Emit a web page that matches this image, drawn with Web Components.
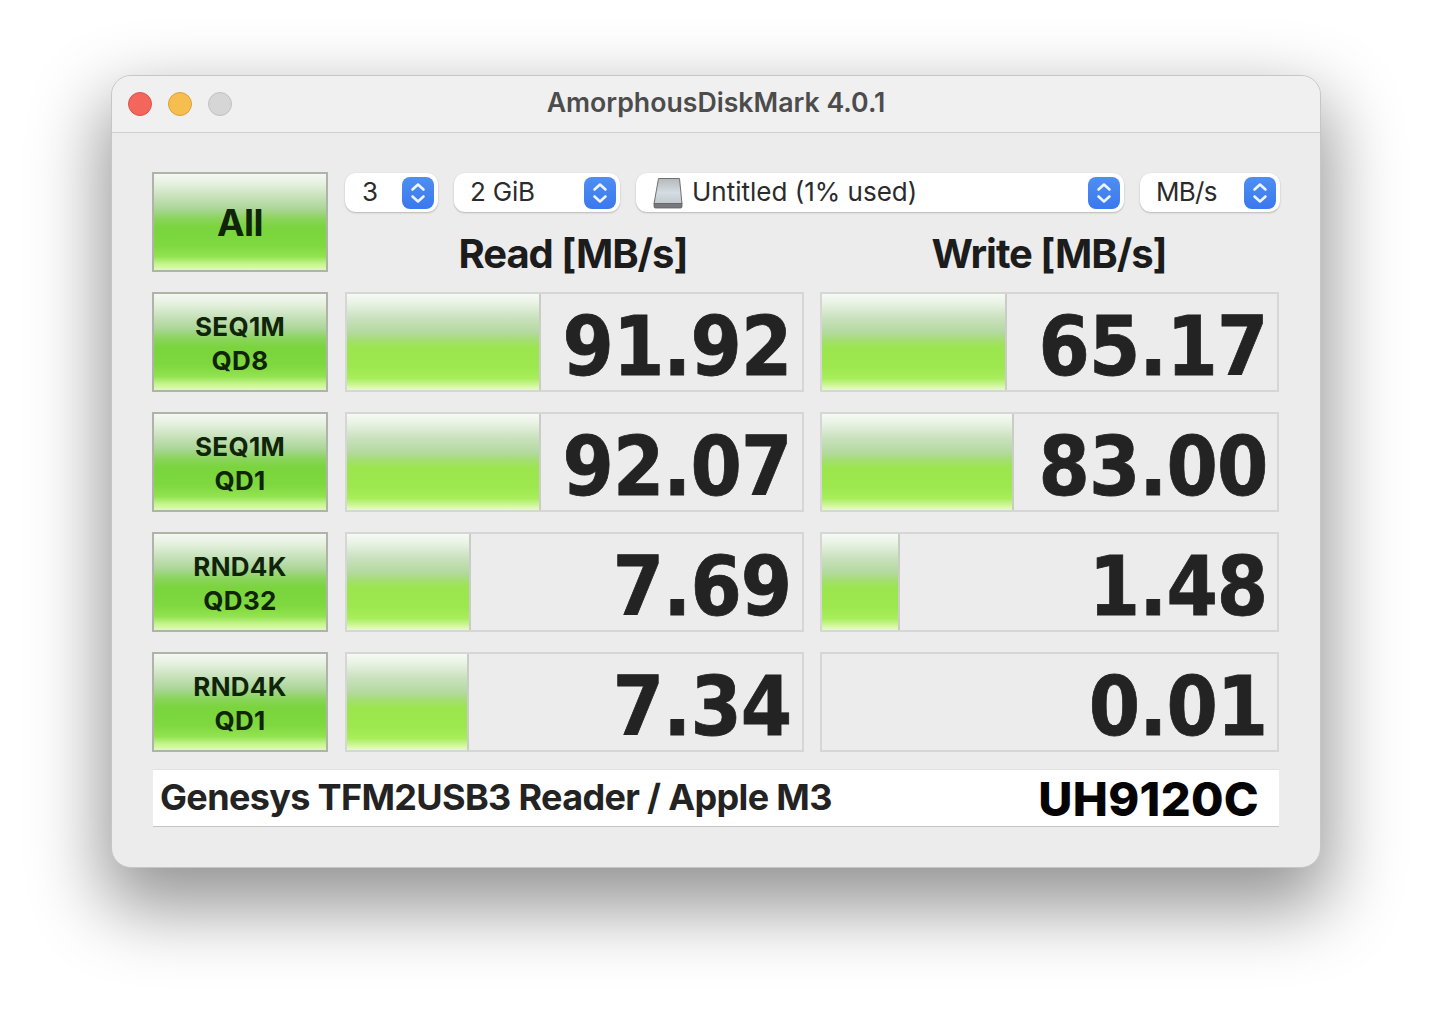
<!doctype html>
<html>
<head>
<meta charset="utf-8">
<title>AmorphousDiskMark</title>
<style>
    html, body {
        margin: 0;
        height: 100%;
        background: #fff;
    }
    body {
        padding: 75px 0 0 111px;
        box-sizing: border-box;
        overflow: hidden;
        font-family: "Inter", "Liberation Sans", sans-serif;
    }
</style>
</head>
<body>
<adm-window title="AmorphousDiskMark 4.0.1">
    <adm-test slot="all" class="all">All</adm-test>
    <adm-select slot="count" style="width:93px">3</adm-select>
    <adm-select slot="size" style="width:166px;letter-spacing:-0.2px;padding-left:16px">2 GiB</adm-select>
    <adm-select slot="disk" style="flex:1" disk>Untitled (1% used)</adm-select>
    <adm-select slot="unit" style="width:140px;letter-spacing:-0.7px;padding-left:16px">MB/s</adm-select>

    <adm-test slot="cells">SEQ1M<br>QD8</adm-test>
    <adm-meter slot="cells" bar="192">91.92</adm-meter>
    <adm-meter slot="cells" bar="183">65.17</adm-meter>

    <adm-test slot="cells">SEQ1M<br>QD1</adm-test>
    <adm-meter slot="cells" bar="192">92.07</adm-meter>
    <adm-meter slot="cells" bar="190">83.00</adm-meter>

    <adm-test slot="cells">RND4K<br>QD32</adm-test>
    <adm-meter slot="cells" bar="122">7.69</adm-meter>
    <adm-meter slot="cells" bar="76">1.48</adm-meter>

    <adm-test slot="cells">RND4K<br>QD1</adm-test>
    <adm-meter slot="cells" bar="120">7.34</adm-meter>
    <adm-meter slot="cells" bar="0">0.01</adm-meter>

    <span slot="footer-left">Genesys TFM2USB3 Reader / Apple M3</span>
    <span slot="footer-right">UH9120C</span>
</adm-window>

<template id="adm-window-template">
    <style>
        :host {
            display: block;
            width: 1208px;
            height: 791px;
            box-sizing: content-box;
            border: 1px solid #c6c6c6;
            border-radius: 20px;
            background: #ececec;
            box-shadow: 0 32px 72px 8px rgba(0, 0, 0, 0.42);
            overflow: hidden;
            color: #232323;
        }

        .titlebar {
            height: 56px;
            display: grid;
            grid-template-columns: 1fr auto 1fr;
            align-items: center;
            background: #f0f0f0;
            border-bottom: 1px solid #cfcfcf;
        }

        .lights {
            display: flex;
            gap: 16px;
            padding-left: 16px;
        }

        .lights i {
            width: 24px;
            height: 24px;
            border-radius: 50%;
            box-sizing: border-box;
            border: 1px solid;
        }

        .lights .close { background: #f2665c; border-color: #d9534b; }
        .lights .min { background: #f6bd4f; border-color: #dca03a; }
        .lights .off { background: #d6d6d6; border-color: #c0c0c0; }

        .title {
            font-size: 26.7px;
            font-weight: 600;
            color: #4c4c4c;
            padding-bottom: 4px;
        }

        .body {
            padding: 39px 40px 0;
        }

        .top {
            display: grid;
            grid-template-columns: 176px 1fr;
            column-gap: 17px;
            height: 100px;
        }

        .top .right {
            display: flex;
            flex-direction: column;
        }

        .selects {
            display: flex;
            gap: 16px;
            height: 42px;
            margin-top: 1px;
        }

        .heads {
            display: grid;
            grid-template-columns: 458px 458px;
            column-gap: 18px;
            text-align: center;
            margin: 17px 0 0 -1px;
            font-size: 40px;
            font-weight: 700;
            line-height: 44px;
            letter-spacing: -1.05px;
            color: #1c1c1c;
        }

        .cells {
            display: grid;
            grid-template-columns: 176px 459px 459px;
            grid-auto-rows: 100px;
            column-gap: 16.5px;
            row-gap: 20px;
            margin-top: 20px;
        }

        .footer {
            margin: 17px 1px 0 1px;
            height: 58px;
            box-sizing: border-box;
            background: #fff;
            border-top: 1px solid #e2e2e2;
            border-bottom: 1px solid #c4c4c4;
            display: flex;
            align-items: center;
            justify-content: space-between;
            padding: 0 20px 0 7px;
        }

        .left {
            font-size: 36px;
            font-weight: 700;
            letter-spacing: -0.66px;
            color: #232323;
            margin-top: -3px;
        }

        .right-text {
            font-size: 47px;
            font-weight: 800;
            color: #050505;
            letter-spacing: 0.3px;
        }
    </style>
    <div class="titlebar">
        <div class="lights"><i class="close"></i><i class="min"></i><i class="off"></i></div>
        <div class="title"></div>
        <div></div>
    </div>
    <div class="body">
        <div class="top">
            <slot name="all"></slot>
            <div class="right">
                <div class="selects">
                    <slot name="count"></slot>
                    <slot name="size"></slot>
                    <slot name="disk"></slot>
                    <slot name="unit"></slot>
                </div>
                <div class="heads"><span>Read [MB/s]</span><span>Write [MB/s]</span></div>
            </div>
        </div>
        <div class="cells"><slot name="cells"></slot></div>
        <div class="footer">
            <span class="left"><slot name="footer-left"></slot></span>
            <span class="right-text"><slot name="footer-right"></slot></span>
        </div>
    </div>
</template>

<template id="adm-test-template">
    <style>
        :host {
            display: flex;
            align-items: center;
            justify-content: center;
            box-sizing: border-box;
            height: 100px;
            padding-top: 4px;
            border: 2px solid #aeb4a8;
            background: linear-gradient(180deg,
                #f3f8f1 0%, #e6f1e0 10%, #c6e1ba 24%, #acd698 36%, #8cd45e 46%,
                #7ad43c 56%, #7ed83e 74%, #92e350 86%, #c8f590 94%, #e0f9c0 100%);
            color: #0f2408;
            text-align: center;
            font-size: 26px;
            font-weight: 700;
            line-height: 34px;
            letter-spacing: 0.3px;
        }

        :host(.all) {
            padding-top: 2px;
            font-size: 37px;
            letter-spacing: -0.5px;
        }
    </style>
    <span><slot></slot></span>
</template>

<template id="adm-select-template">
    <style>
        :host {
            display: flex;
            align-items: center;
            box-sizing: border-box;
            height: 39px;
            background: #fff;
            border-radius: 11px;
            box-shadow: 0 1px 2px rgba(0, 0, 0, 0.22), 0 0 1px rgba(0, 0, 0, 0.08);
            padding: 0 4px 0 17px;
            font-size: 26px;
            color: #2b2b2b;
        }

        .label {
            flex: 1;
            white-space: nowrap;
            padding-bottom: 3px;
        }

        .disk {
            display: none;
            margin: 0 9px 0 0;
        }

        :host([disk]) .disk {
            display: block;
        }

        .stepper {
            width: 32px;
            height: 32px;
        }
    </style>
    <svg class="disk" width="30" height="32" viewBox="0 0 30 32">
        <defs>
            <linearGradient id="disk-face" x1="0" y1="0" x2="0" y2="1">
                <stop offset="0" stop-color="#b4b8bb"/>
                <stop offset="0.55" stop-color="#d4dde2"/>
                <stop offset="1" stop-color="#c2c9ce"/>
            </linearGradient>
        </defs>
        <path d="M5.5 1.5H26.5L29 27H1Z" fill="url(#disk-face)" stroke="#6e7073" stroke-width="1"/>
        <path d="M1 26.5H29V29.5Q29 31 27.5 31H2.5Q1 31 1 29.5Z" fill="#77797c" stroke="#5e6062" stroke-width="0.8"/>
    </svg>
    <span class="label"><slot></slot></span>
    <svg class="stepper" viewBox="0 0 32 32">
        <defs>
            <linearGradient id="step-face" x1="0" y1="0" x2="0" y2="1">
                <stop offset="0" stop-color="#4e8ff0"/>
                <stop offset="1" stop-color="#3a78ee"/>
            </linearGradient>
        </defs>
        <rect width="32" height="32" rx="8" fill="url(#step-face)"/>
        <path d="M10.5 12.5L16 7.5L21.5 12.5M10.5 19.5L16 24.5L21.5 19.5" fill="none" stroke="#eef4ff" stroke-width="2.6" stroke-linecap="round" stroke-linejoin="round"/>
    </svg>
</template>

<template id="adm-meter-template">
    <style>
        :host {
            display: grid;
            box-sizing: border-box;
            height: 100px;
            border: 2px solid #d6d6d6;
            background: #ececec;
            overflow: hidden;
        }

        .bar, .value {
            grid-area: 1 / 1;
        }

        .bar {
            box-sizing: content-box;
            border-right: 2px solid #c9cdc6;
            background: linear-gradient(180deg,
                #f6faf5 0%, #e8f2e3 10%, #cbe2c0 24%, #b4d99f 40%, #a4de72 48%,
                #9be64e 56%, #9de84e 76%, #a8ee5c 88%, #d4f7a4 96%, #e8fbcb 100%);
        }

        .value {
            justify-self: end;
            align-self: center;
            margin-top: 9px;
            margin-right: 10px;
            font-family: "DejaVu Sans", "Liberation Sans", sans-serif;
            font-weight: 700;
            font-size: 82px;
            line-height: 1;
            letter-spacing: -1px;
            color: #232323;
            -webkit-text-stroke: 0.8px #232323;
            transform: scaleX(0.9);
            transform-origin: right center;
        }
    </style>
    <div class="bar"></div>
    <div class="value"><slot></slot></div>
</template>

<script>
    function attach_template(element, id) {
        const template_clone = document.getElementById(id).content.cloneNode(true);
        element.attachShadow({ mode: "open" }).append(template_clone);
    }

    customElements.define(
        "adm-window",
        class extends HTMLElement {
            constructor() {
                super();
                attach_template(this, "adm-window-template");
            }

            connectedCallback() {
                this.shadowRoot.querySelector(".title").textContent = this.getAttribute("title");
                this.removeAttribute("title");
            }
        },
    );

    customElements.define(
        "adm-test",
        class extends HTMLElement {
            constructor() {
                super();
                attach_template(this, "adm-test-template");
            }
        },
    );

    customElements.define(
        "adm-select",
        class extends HTMLElement {
            constructor() {
                super();
                attach_template(this, "adm-select-template");
            }
        },
    );

    customElements.define(
        "adm-meter",
        class extends HTMLElement {
            constructor() {
                super();
                attach_template(this, "adm-meter-template");
            }

            connectedCallback() {
                const bar = this.shadowRoot.querySelector(".bar");
                const width = Number(this.getAttribute("bar"));
                if (width > 0) {
                    bar.style.width = width + "px";
                    bar.style.justifySelf = "start";
                } else {
                    bar.style.display = "none";
                }
            }
        },
    );
</script>
</body>
</html>
